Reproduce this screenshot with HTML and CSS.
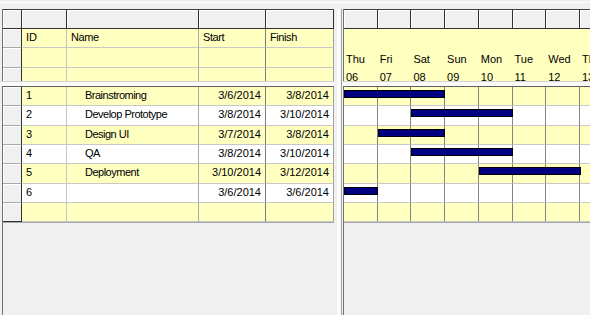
FILE: index.html
```html
<!DOCTYPE html>
<html>
<head>
<meta charset="utf-8">
<title>Gantt</title>
<link rel="stylesheet" href="styles.css">
</head>
<body>
<div class="topbar"></div>
<div class="main">
  <section class="pane pane-left">
    <div class="head">
      <div class="row row-cap">
        <div class="rh"></div><div class="hc c-id"></div><div class="hc c-name"></div><div class="hc c-start"></div><div class="hc c-finish"></div>
      </div>
      <div class="row yel">
        <div class="rh"></div><div class="c c-id">ID</div><div class="c c-name txt">Name</div><div class="c c-start txt">Start</div><div class="c c-finish txt">Finish</div>
      </div>
      <div class="row yel">
        <div class="rh"></div><div class="c c-id"></div><div class="c c-name"></div><div class="c c-start"></div><div class="c c-finish"></div>
      </div>
      <div class="row yel">
        <div class="rh"></div><div class="c c-id"></div><div class="c c-name"></div><div class="c c-start"></div><div class="c c-finish"></div>
      </div>
    </div>
    <div class="hsplit"></div>
    <div class="body">
      <div class="rows">
        <div class="row yel">
          <div class="rh"></div><div class="c c-id">1</div><div class="c c-name task">Brainstroming</div><div class="c c-start num">3/6/2014</div><div class="c c-finish num">3/8/2014</div>
        </div>
        <div class="row wht">
          <div class="rh"></div><div class="c c-id">2</div><div class="c c-name task">Develop Prototype</div><div class="c c-start num">3/8/2014</div><div class="c c-finish num">3/10/2014</div>
        </div>
        <div class="row yel">
          <div class="rh"></div><div class="c c-id">3</div><div class="c c-name task">Design UI</div><div class="c c-start num">3/7/2014</div><div class="c c-finish num">3/8/2014</div>
        </div>
        <div class="row wht">
          <div class="rh"></div><div class="c c-id">4</div><div class="c c-name task">QA</div><div class="c c-start num">3/8/2014</div><div class="c c-finish num">3/10/2014</div>
        </div>
        <div class="row yel">
          <div class="rh"></div><div class="c c-id">5</div><div class="c c-name task">Deployment</div><div class="c c-start num">3/10/2014</div><div class="c c-finish num">3/12/2014</div>
        </div>
        <div class="row wht">
          <div class="rh"></div><div class="c c-id">6</div><div class="c c-name task"></div><div class="c c-start num">3/6/2014</div><div class="c c-finish num">3/6/2014</div>
        </div>
        <div class="row yel">
          <div class="rh rh-cur"></div><div class="c c-id"></div><div class="c c-name"></div><div class="c c-start"></div><div class="c c-finish"></div>
        </div>
      </div>
    </div>
  </section>

  <div class="vsplit"></div>

  <section class="pane pane-right">
    <div class="head">
      <div class="row row-cap">
        <div class="hc gc"></div><div class="hc gc"></div><div class="hc gc"></div><div class="hc gc"></div><div class="hc gc"></div><div class="hc gc"></div><div class="hc gc"></div><div class="hc gc"></div>
      </div>
      <div class="days">
        <div class="day"><span class="dn">Thu</span><span class="dd">06</span></div>
        <div class="day"><span class="dn">Fri</span><span class="dd">07</span></div>
        <div class="day"><span class="dn">Sat</span><span class="dd">08</span></div>
        <div class="day"><span class="dn">Sun</span><span class="dd">09</span></div>
        <div class="day"><span class="dn">Mon</span><span class="dd">10</span></div>
        <div class="day"><span class="dn">Tue</span><span class="dd">11</span></div>
        <div class="day"><span class="dn">Wed</span><span class="dd">12</span></div>
        <div class="day"><span class="dn">Thu</span><span class="dd">13</span></div>
      </div>
    </div>
    <div class="hsplit"></div>
    <div class="body">
      <div class="rows">
        <div class="row grow yel">
          <div class="gc"></div><div class="gc"></div><div class="gc"></div><div class="gc"></div><div class="gc"></div><div class="gc"></div><div class="gc"></div><div class="gc"></div>
          <div class="bar" style="left:0px;width:101px"></div>
        </div>
        <div class="row grow wht">
          <div class="gc"></div><div class="gc"></div><div class="gc"></div><div class="gc"></div><div class="gc"></div><div class="gc"></div><div class="gc"></div><div class="gc"></div>
          <div class="bar" style="left:67.4px;width:102px"></div>
        </div>
        <div class="row grow yel">
          <div class="gc"></div><div class="gc"></div><div class="gc"></div><div class="gc"></div><div class="gc"></div><div class="gc"></div><div class="gc"></div><div class="gc"></div>
          <div class="bar" style="left:33.7px;width:67.4px"></div>
        </div>
        <div class="row grow wht">
          <div class="gc"></div><div class="gc"></div><div class="gc"></div><div class="gc"></div><div class="gc"></div><div class="gc"></div><div class="gc"></div><div class="gc"></div>
          <div class="bar" style="left:67.4px;width:102px"></div>
        </div>
        <div class="row grow yel">
          <div class="gc"></div><div class="gc"></div><div class="gc"></div><div class="gc"></div><div class="gc"></div><div class="gc"></div><div class="gc"></div><div class="gc"></div>
          <div class="bar" style="left:134.8px;width:102px"></div>
        </div>
        <div class="row grow wht">
          <div class="gc"></div><div class="gc"></div><div class="gc"></div><div class="gc"></div><div class="gc"></div><div class="gc"></div><div class="gc"></div><div class="gc"></div>
          <div class="bar" style="left:0px;width:34px"></div>
        </div>
        <div class="row grow yel">
          <div class="gc"></div><div class="gc"></div><div class="gc"></div><div class="gc"></div><div class="gc"></div><div class="gc"></div><div class="gc"></div><div class="gc"></div>
        </div>
      </div>
    </div>
  </section>
</div>
</body>
</html>
```

FILE: styles.css
```css
* { box-sizing: border-box; }
html, body { margin: 0; padding: 0; }
body {
  width: 590px;
  height: 315px;
  overflow: hidden;
  background: #f0f0f0;
  font-family: "Liberation Sans", Arial, sans-serif;
  font-size: 11px;
  line-height: 13px;
  color: #000;
}

.topbar {
  height: 9px;
  background: linear-gradient(#f0f0f0 0 2px, #ffffff 2px 3px, #f0f0f0 3px);
}

.main {
  display: flex;
  height: 306px;
}

.pane {
  display: flex;
  flex-direction: column;
  overflow: hidden;
}
.pane-left { width: 334px; flex-shrink: 0; }
.pane-right { flex: 1; min-width: 0; }

.pane-left .head,
.pane-left .body { margin-left: 2px; border-left: 1px solid #707070; }
.pane-right .head,
.pane-right .body { border-left: 1px solid #707070; }

.head {
  height: 72px;
  overflow: hidden;
  flex-shrink: 0;
}

.hsplit {
  height: 5px;
  flex-shrink: 0;
  background: #fbfbfb;
  border-top: 1px solid #d4d4d4;
}

.body {
  flex: 1;
  border-top: 1px solid #606060;
}

.rows {
  border-bottom: 1px solid #a8a8a8;
}

.row {
  display: flex;
  height: 19.333px;
  flex-shrink: 0;
}
.row-cap {
  height: 20px;
  border-top: 1px solid #404040;
}
.yel { background: #ffffc0; }
.wht { background: #ffffff; }

/* row header column */
.rh {
  width: 19px;
  flex-shrink: 0;
  background: #f0f0f0;
  border-right: 1px solid #303030;
  border-bottom: 1px solid #a8a8a8;
  box-shadow: inset 1px 1px 0 #ffffff;
}
.row-cap .rh { border-bottom-color: #303030; }
.rh-cur { border-bottom-color: #303030; }

/* header caption cells */
.hc {
  flex-shrink: 0;
  background: #f0f0f0;
  border-right: 1px solid #303030;
  border-bottom: 1px solid #303030;
  box-shadow: inset 1px 1px 0 #ffffff;
}

/* data cells */
.c {
  flex-shrink: 0;
  padding: 2px 4px 0 4px;
  white-space: nowrap;
  overflow: hidden;
  border-right: 1px solid #a0a0a0;
  border-bottom: 1px solid #c8c8c8;
}
.c-id { width: 45px; border-right-color: #c4c4c4; }
.c-name { width: 132px; border-right-color: #a8a8a8; }
.c-start { width: 67px; border-right-color: #7c7c7c; }
.c-finish { width: 68px; border-right-color: #a0a0a0; }
.hc.c-id, .hc.c-name, .hc.c-start, .hc.c-finish { border-right-color: #303030; }

.txt { letter-spacing: -0.4px; }
.task { padding-left: 18px; letter-spacing: -0.5px; }
.num { text-align: right; }

/* splitter between panes */
.vsplit {
  width: 9px;
  flex-shrink: 0;
  background: linear-gradient(to right, #f0f0f0 0 3px, #fdfdfd 3px 6px, #f0f0f0 6px 7px, #a8a8a8 7px 8px, #f0f0f0 8px);
}

/* gantt */
.gc {
  width: 33.71px;
  flex-shrink: 0;
}
.grow .gc {
  border-right: 1px solid #858585;
  border-bottom: 1px solid #c8c8c8;
}
.days {
  display: flex;
  height: 52px;
  background: #ffffc0;
}
.day {
  width: 33.71px;
  flex-shrink: 0;
  padding: 24px 0 0 2px;
  white-space: nowrap;
}
.dn, .dd { display: block; }
.dn { margin-bottom: 5px; }

.grow { position: relative; }
.bar {
  position: absolute;
  top: 3px;
  height: 8px;
  background: #000080;
  border: 1px solid #000000;
}
```
